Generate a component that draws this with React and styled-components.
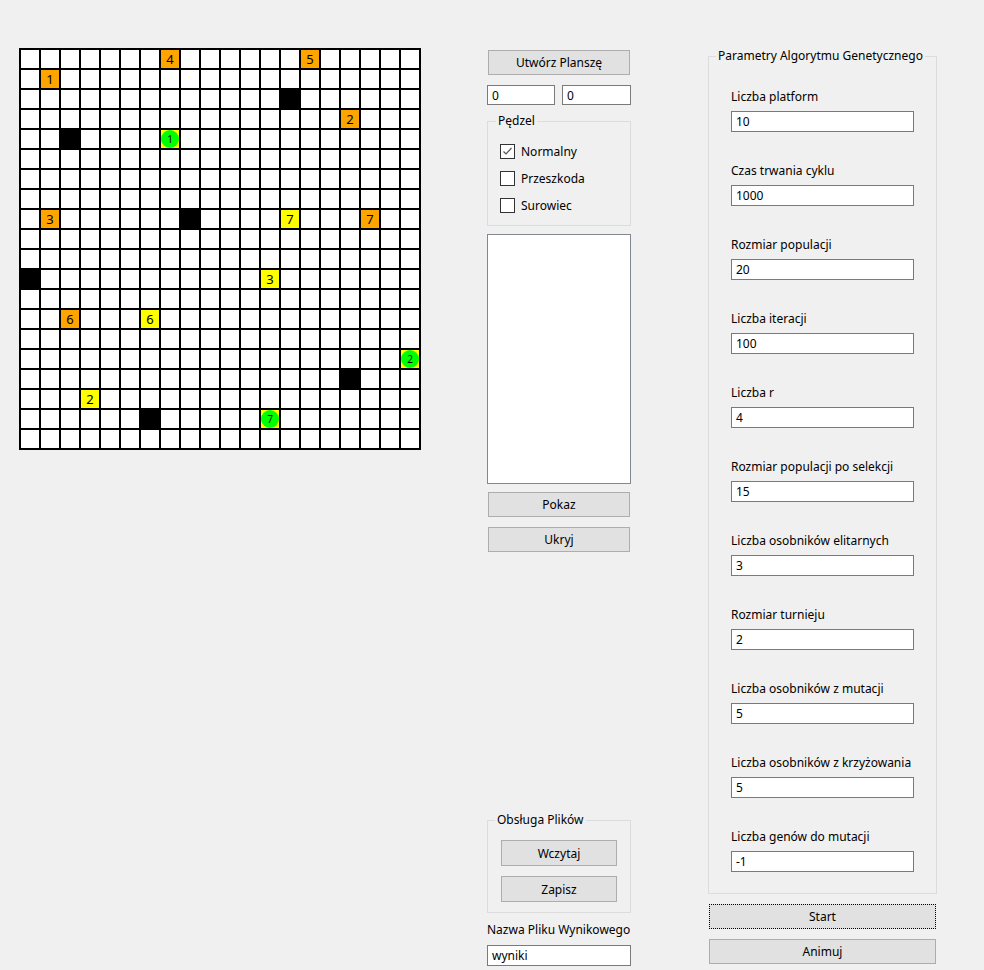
import React from "react";
import styled, { createGlobalStyle } from "styled-components";

const GlobalStyle = createGlobalStyle`
  html, body {
    margin: 0;
    padding: 0;
    background: #f0f0f0;
  }
  body {
    font-family: "Noto Sans", "Liberation Sans", sans-serif;
    font-size: 12px;
    color: #000;
  }
`;

const Window = styled.div`
  display: flex;
  align-items: flex-start;
  width: 984px;
  height: 970px;
  box-sizing: border-box;
  padding: 48px 0 0 19px;
  overflow: hidden;
`;

// board
const Board = styled.div`
  flex: none;
  display: grid;
  grid-template-columns: repeat(20, 18px);
  grid-auto-rows: 18px;
  gap: 2px;
  padding: 2px;
  background: #000;
`;

const COLORS = {
  empty: "#ffffff",
  orange: "#ffa500",
  yellow: "#ffff00",
  green: "#ffff00",
  black: "#000000",
};

const Cell = styled.div`
  display: flex;
  align-items: center;
  justify-content: center;
  background: ${(p) => COLORS[p.$kind]};
  font-size: 13px;
  line-height: 1;
`;

const Resource = styled.span`
  display: flex;
  align-items: center;
  justify-content: center;
  width: 18px;
  height: 18px;
  border-radius: 50%;
  background: #00ff00;
  font-size: 10px;
  line-height: 1;
`;

// middle column
const Middle = styled.div`
  flex: none;
  display: flex;
  flex-direction: column;
  width: 144px;
  margin-left: 66px;
`;

const Button = styled.button`
  box-sizing: border-box;
  height: ${(p) => p.$h || 25}px;
  margin: ${(p) => p.$mt || 0}px 1px 0 1px;
  padding: 0;
  background: #e1e1e1;
  border: 1px ${(p) => (p.$focused ? "dotted #000" : "solid #adadad")};
  font-family: inherit;
  font-size: 12px;
  color: #000;
`;

const SizeRow = styled.div`
  display: flex;
  gap: 7px;
  margin-top: 10px;
`;

const TextBox = styled.div`
  box-sizing: border-box;
  flex: ${(p) => (p.$grow ? 1 : "none")};
  width: ${(p) => (p.$w ? `${p.$w}px` : "auto")};
  height: ${(p) => p.$h || 21}px;
  margin-top: ${(p) => p.$mt || 0}px;
  padding: 0 4px;
  display: flex;
  align-items: center;
  background: #fff;
  border: 1px solid #7a7a7a;
  font-size: 12px;
`;

const Group = styled.fieldset`
  box-sizing: border-box;
  margin: ${(p) => p.$mt || 0}px 0 0 0;
  padding: 0;
  min-width: 0;
  height: ${(p) => p.$h}px;
  border: 1px solid #dcdcdc;
  display: flex;
  flex-direction: column;
`;

const Legend = styled.legend`
  margin-left: ${(p) => p.$ml || 7}px;
  padding: 0 2px;
  line-height: 16px;
  font-size: 12px;
`;

const Checks = styled.div`
  display: flex;
  flex-direction: column;
  padding: 9px 0 0 12px;
`;

const CheckRow = styled.label`
  display: flex;
  align-items: center;
  gap: 6px;
  height: 27px;
`;

const Box = styled.span`
  box-sizing: border-box;
  width: 15px;
  height: 15px;
  border: 1px solid #333;
  background: #fff;
  display: flex;
  align-items: center;
  justify-content: center;
`;

const ListBox = styled.div`
  box-sizing: border-box;
  height: 250px;
  margin-top: 8px;
  background: #fff;
  border: 1px solid #828790;
`;

const FileButtons = styled.div`
  display: flex;
  flex-direction: column;
  gap: 10px;
  padding: 12px 12px 0 12px;
`;

const Caption = styled.div`
  line-height: 16px;
  margin-top: ${(p) => p.$mt || 0}px;
`;

// right column
const Right = styled.div`
  flex: none;
  display: flex;
  flex-direction: column;
  width: 229px;
  margin-left: 77px;
`;

const Params = styled.div`
  display: flex;
  flex-direction: column;
  gap: 31px;
  padding: 25px 0 0 22px;
`;

const Param = styled.div`
  display: flex;
  flex-direction: column;
  gap: 6px;
`;

const cells = {
  "7,0": ["orange", 4],
  "14,0": ["orange", 5],
  "1,1": ["orange", 1],
  "13,2": ["black"],
  "16,3": ["orange", 2],
  "2,4": ["black"],
  "7,4": ["green", 1],
  "1,8": ["orange", 3],
  "8,8": ["black"],
  "13,8": ["yellow", 7],
  "17,8": ["orange", 7],
  "0,11": ["black"],
  "12,11": ["yellow", 3],
  "2,13": ["orange", 6],
  "6,13": ["yellow", 6],
  "19,15": ["green", 2],
  "16,16": ["black"],
  "3,17": ["yellow", 2],
  "6,18": ["black"],
  "12,18": ["green", 7],
};

const params = [
  ["Liczba platform", "10"],
  ["Czas trwania cyklu", "1000"],
  ["Rozmiar populacji", "20"],
  ["Liczba iteracji", "100"],
  ["Liczba r", "4"],
  ["Rozmiar populacji po selekcji", "15"],
  ["Liczba osobników elitarnych", "3"],
  ["Rozmiar turnieju", "2"],
  ["Liczba osobników z mutacji", "5"],
  ["Liczba osobników z krzyżowania", "5"],
  ["Liczba genów do mutacji", "-1"],
];

const Check = ({ checked, children }) => (
  <CheckRow>
    <Box>
      {checked && (
        <svg width="11" height="11" viewBox="0 0 11 11">
          <path d="M1.5 5.5 L4 8 L9.5 2" fill="none" stroke="#555" strokeWidth="1.2" />
        </svg>
      )}
    </Box>
    {children}
  </CheckRow>
);

const App = () => {
  const board = [];
  for (let r = 0; r < 20; r++) {
    for (let c = 0; c < 20; c++) {
      const cell = cells[`${c},${r}`];
      const kind = cell ? cell[0] : "empty";
      board.push(
        <Cell key={`${c}-${r}`} $kind={kind}>
          {kind === "green" ? <Resource>{cell[1]}</Resource> : cell && cell[1]}
        </Cell>
      );
    }
  }

  return (
    <>
      <GlobalStyle />
      <Window>
        <Board>{board}</Board>

        <Middle>
          <Button $mt={2}>Utwórz Planszę</Button>
          <SizeRow>
            <TextBox $w={68} $h={20}>0</TextBox>
            <TextBox $grow $h={20}>0</TextBox>
          </SizeRow>
          <Group $mt={8} $h={113}>
            <Legend $ml={8}>Pędzel</Legend>
            <Checks>
              <Check checked>Normalny</Check>
              <Check>Przeszkoda</Check>
              <Check>Surowiec</Check>
            </Checks>
          </Group>
          <ListBox />
          <Button $mt={8}>Pokaz</Button>
          <Button $mt={10}>Ukryj</Button>
          <Group $mt={260} $h={101}>
            <Legend>Obsługa Plików</Legend>
            <FileButtons>
              <Button $h={26}>Wczytaj</Button>
              <Button $h={26}>Zapisz</Button>
            </FileButtons>
          </Group>
          <Caption $mt={9}>Nazwa Pliku Wynikowego</Caption>
          <TextBox $mt={7}>wyniki</TextBox>
        </Middle>

        <Right>
          <Group $h={846}>
            <Legend $ml={7}>Parametry Algorytmu Genetycznego</Legend>
            <Params>
              {params.map(([label, value]) => (
                <Param key={label}>
                  <Caption>{label}</Caption>
                  <TextBox $w={183}>{value}</TextBox>
                </Param>
              ))}
            </Params>
          </Group>
          <Button $mt={10} $focused>Start</Button>
          <Button $mt={10}>Animuj</Button>
        </Right>
      </Window>
    </>
  );
};

export default App;
